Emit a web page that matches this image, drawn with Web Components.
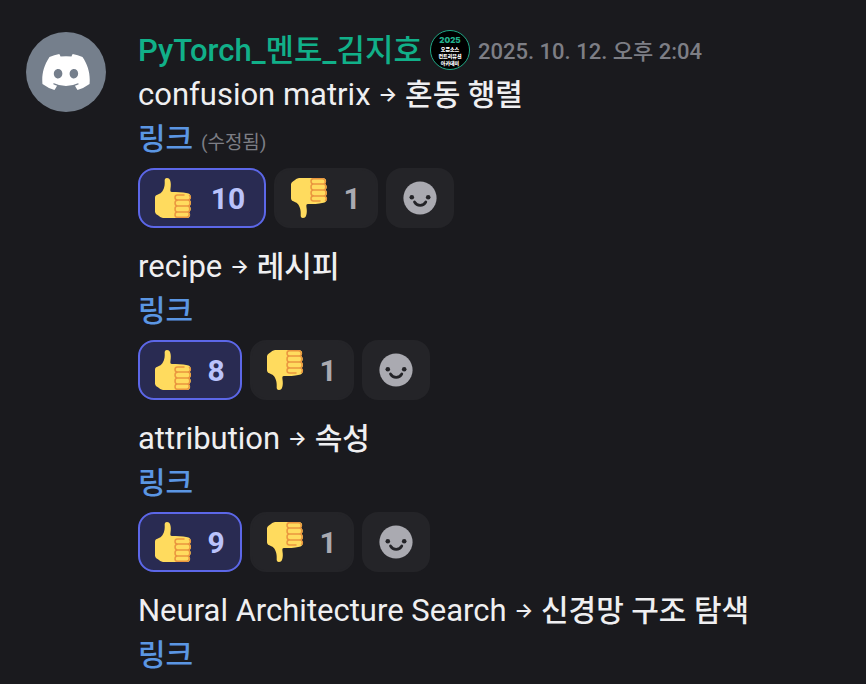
<!DOCTYPE html>
<html lang="ko">
<head>
<meta charset="utf-8">
<meta name="viewport" content="width=device-width, initial-scale=1">
<title>PyTorch_멘토_김지호</title>
<style>
    body {
        margin: 0;
        background: #1a1a1e;
        color: #efeff1;
        font-family: Roboto, "Noto Sans CJK KR", sans-serif;
        font-size: 31px;
        line-height: 42px;
    }
</style>
</head>
<body>
<chat-message author="PyTorch_멘토_김지호" time="2025. 10. 12. 오후 2:04">
    <term-entry term="confusion matrix" translation="혼동 행렬" edited>
        <reaction-chip kind="up" count="10" mine></reaction-chip>
        <reaction-chip kind="down" count="1"></reaction-chip>
        <add-reaction></add-reaction>
    </term-entry>
    <term-entry term="recipe" translation="레시피">
        <reaction-chip kind="up" count="8" mine></reaction-chip>
        <reaction-chip kind="down" count="1"></reaction-chip>
        <add-reaction></add-reaction>
    </term-entry>
    <term-entry term="attribution" translation="속성">
        <reaction-chip kind="up" count="9" mine></reaction-chip>
        <reaction-chip kind="down" count="1"></reaction-chip>
        <add-reaction></add-reaction>
    </term-entry>
    <term-entry term="Neural Architecture Search" translation="신경망 구조 탐색"></term-entry>
</chat-message>

<script>
class UserAvatar extends HTMLElement {
    constructor() {
        super();
        this.attachShadow({mode: 'open'}).innerHTML = `
        <style>
            :host {
                display: flex;
                align-items: center;
                justify-content: center;
                flex: none;
                width: 80px;
                height: 80px;
                border-radius: 50%;
                background: #757f8c;
            }

            svg {
                width: 48px;
                height: 36px;
            }
        </style>
        <svg viewBox="0 0 127.14 96.36" fill="#fff" aria-hidden="true">
            <path d="M107.7,8.07A105.15,105.15,0,0,0,81.47,0a72.06,72.06,0,0,0-3.36,6.83A97.68,97.68,0,0,0,49,6.83,72.37,72.37,0,0,0,45.64,0,105.89,105.89,0,0,0,19.39,8.09C2.79,32.65-1.71,56.6.54,80.21h0A105.73,105.73,0,0,0,32.71,96.36,77.7,77.7,0,0,0,39.6,85.25a68.42,68.42,0,0,1-10.85-5.18c.91-.66,1.8-1.34,2.66-2a75.57,75.57,0,0,0,64.32,0c.87.71,1.76,1.39,2.66,2a68.68,68.68,0,0,1-10.87,5.19,77,77,0,0,0,6.89,11.1A105.25,105.25,0,0,0,126.6,80.22h0C129.24,52.84,122.09,29.11,107.7,8.07ZM42.45,65.69C36.18,65.69,31,60,31,53s5-12.74,11.43-12.74S54,46,53.89,53,48.84,65.69,42.45,65.69Zm42.24,0C78.41,65.69,73.25,60,73.25,53s5-12.74,11.44-12.74S96.23,46,96.12,53,91.08,65.69,84.69,65.69Z"/>
        </svg>
        `;
    }
}

customElements.define('user-avatar', UserAvatar);

class RoleBadge extends HTMLElement {
    constructor() {
        super();
        this.attachShadow({mode: 'open'}).innerHTML = `
        <style>
            :host {
                display: flex;
                flex-direction: column;
                align-items: center;
                justify-content: center;
                flex: none;
                box-sizing: border-box;
                width: 40px;
                height: 40px;
                border: 1px solid #1fa886;
                border-radius: 50%;
                background: #000;
                color: #fff;
                font: 900 5px/7px "Noto Sans CJK KR", sans-serif;
                white-space: nowrap;
            }

            b {
                font: 900 8px/10px Inter, sans-serif;
                color: #22b08d;
            }
        </style>
        <b>2025</b>
        <span>오픈소스</span>
        <span>컨트리뷰션</span>
        <span>아카데미</span>
        `;
    }
}

customElements.define('role-badge', RoleBadge);

class ReactionChip extends HTMLElement {
    constructor() {
        super();
        this._shadowRoot = this.attachShadow({mode: 'open'});
    }

    connectedCallback() {
        this.render();
    }

    render() {
        const count = this.getAttribute('count');
        const kind = this.getAttribute('kind');
        this._shadowRoot.innerHTML = `
        <style>
            :host {
                display: block;
            }

            button {
                display: flex;
                align-items: center;
                gap: 12px;
                height: 60px;
                padding: 0 14px;
                border: 2px solid #242428;
                border-radius: 16px;
                background: #242428;
                color: #aaaab1;
                font: 700 30px/40px Roboto, sans-serif;
                cursor: pointer;
            }

            :host([mine]) button {
                border-color: #5c67e8;
                background: #292b52;
                color: #bac3fb;
            }

            svg {
                width: 40px;
                height: 40px;
            }

            :host([kind="down"]) svg {
                transform: scaleY(-1);
            }

            .count {
                min-width: 20px;
                padding-top: 2px;
                text-align: center;
            }

            .wide {
                min-width: 44px;
            }
        </style>
        <button type="button" aria-label="${kind === 'up' ? '좋아요' : '싫어요'} ${count}" aria-pressed="${this.hasAttribute('mine')}">
            <svg viewBox="0 0 40 40" aria-hidden="true">
                <path fill="#ffdb5e" d="M13 0C11 0 10.5 1.500 10.700 3.500C11 8.500 9.500 13 6.500 15.300C3.500 17 1 16.800 1 20V33.500C1 36 3 36.500 5 38C6.500 39.600 8 40 11 40H33C36.300 40 37.200 36 35 34.200C37.300 32.600 37.300 29.600 35.500 28.200C37.500 26.500 37.500 23.500 35.800 22C38 19 36.500 15.500 33.500 15.300C28 14 23 14 18 14C16 14 16.300 12.500 16.500 10.500C17 7.500 17 4.500 16 2C15.500 .800 14.500 0 13 0Z"/>
                <path fill="none" stroke="#ea963f" stroke-width="1.500" stroke-linecap="round" stroke-linejoin="round" d="M30 17H23.500C20.200 17 20.200 22 23.500 22H33.500C37 22.200 37 27.800 33.500 28H23.500C20.200 28 20.200 22.200 23.500 22.200M23.500 28C20.200 28 20.200 34 23.500 34H33.500C36.500 33.800 36.500 28.200 33.500 28M23.500 34C20.200 34 20.200 39.300 23.500 39.300H32.500C36 39.300 36 34 33.500 34M33.500 22C36.500 22 37 19 35.500 17.500"/>
            </svg>
            <span class="count${count.length > 1 ? ' wide' : ''}">${count}</span>
        </button>
        `;
    }
}

customElements.define('reaction-chip', ReactionChip);

class AddReaction extends HTMLElement {
    constructor() {
        super();
        this.attachShadow({mode: 'open'}).innerHTML = `
        <style>
            :host {
                display: block;
            }

            button {
                display: flex;
                align-items: center;
                justify-content: center;
                width: 68px;
                height: 60px;
                padding: 0;
                border: 0;
                border-radius: 16px;
                background: #242428;
                cursor: pointer;
            }

            svg {
                width: 40px;
                height: 40px;
            }
        </style>
        <button type="button" aria-label="반응 추가하기">
            <svg viewBox="0 0 40 40" aria-hidden="true">
                <circle cx="20" cy="20" r="16.600" fill="#aaaab1"/>
                <circle cx="11.800" cy="19.200" r="2.300" fill="#242428"/>
                <circle cx="28.200" cy="19.200" r="2.300" fill="#242428"/>
                <path fill="none" stroke="#242428" stroke-width="2.700" stroke-linecap="round" d="M14.500 24C17 28.400 23.300 28.400 25.800 24"/>
            </svg>
        </button>
        `;
    }
}

customElements.define('add-reaction', AddReaction);

class TermEntry extends HTMLElement {
    constructor() {
        super();
        this._shadowRoot = this.attachShadow({mode: 'open'});
    }

    connectedCallback() {
        this.render();
    }

    render() {
        const edited = this.hasAttribute('edited') ? '<small>(수정됨)</small>' : '';
        this._shadowRoot.innerHTML = `
        <style>
            :host {
                display: block;
            }

            p {
                margin: 0;
                padding-top: 2px;
            }

            .arrow {
                font: 600 20px/20px Inter, sans-serif;
                vertical-align: 4px;
            }

            .translation {
                font-size: 30px;
                font-weight: 500;
                line-height: 40px;
            }

            a {
                color: #5b96e3;
                font-size: 30px;
                font-weight: 500;
                line-height: 40px;
                text-decoration: none;
            }

            a:hover {
                text-decoration: underline;
            }

            small {
                color: #7d7e85;
                font-size: 19px;
                line-height: 20px;
            }

            .reactions {
                display: flex;
                flex-wrap: wrap;
                gap: 8px;
                padding: 8px 0 16px;
            }
        </style>
        <p>${this.getAttribute('term')} <span class="arrow">→</span> <span class="translation">${this.getAttribute('translation')}</span></p>
        <p><a href="#">링크</a> ${edited}</p>
        ${this.children.length ? '<div class="reactions"><slot></slot></div>' : ''}
        `;
    }
}

customElements.define('term-entry', TermEntry);

class ChatMessage extends HTMLElement {
    constructor() {
        super();
        this._shadowRoot = this.attachShadow({mode: 'open'});
    }

    connectedCallback() {
        this.render();
    }

    render() {
        this._shadowRoot.innerHTML = `
        <style>
            :host {
                display: flex;
                gap: 32px;
                padding: 28px 26px 8px;
            }

            user-avatar {
                margin-top: 4px;
            }

            .content {
                flex: 1;
                min-width: 0;
            }

            header {
                display: flex;
                align-items: center;
                gap: 8px;
            }

            .author {
                padding-top: 2px;
                color: #11b089;
                font-weight: 500;
            }

            time {
                padding-top: 4px;
                color: #7d7e85;
                font-size: 22px;
                font-weight: 500;
                line-height: 40px;
            }
        </style>
        <user-avatar></user-avatar>
        <div class="content">
            <header>
                <span class="author">${this.getAttribute('author')}</span>
                <role-badge></role-badge>
                <time>${this.getAttribute('time')}</time>
            </header>
            <slot></slot>
        </div>
        `;
    }
}

customElements.define('chat-message', ChatMessage);
</script>
</body>
</html>
